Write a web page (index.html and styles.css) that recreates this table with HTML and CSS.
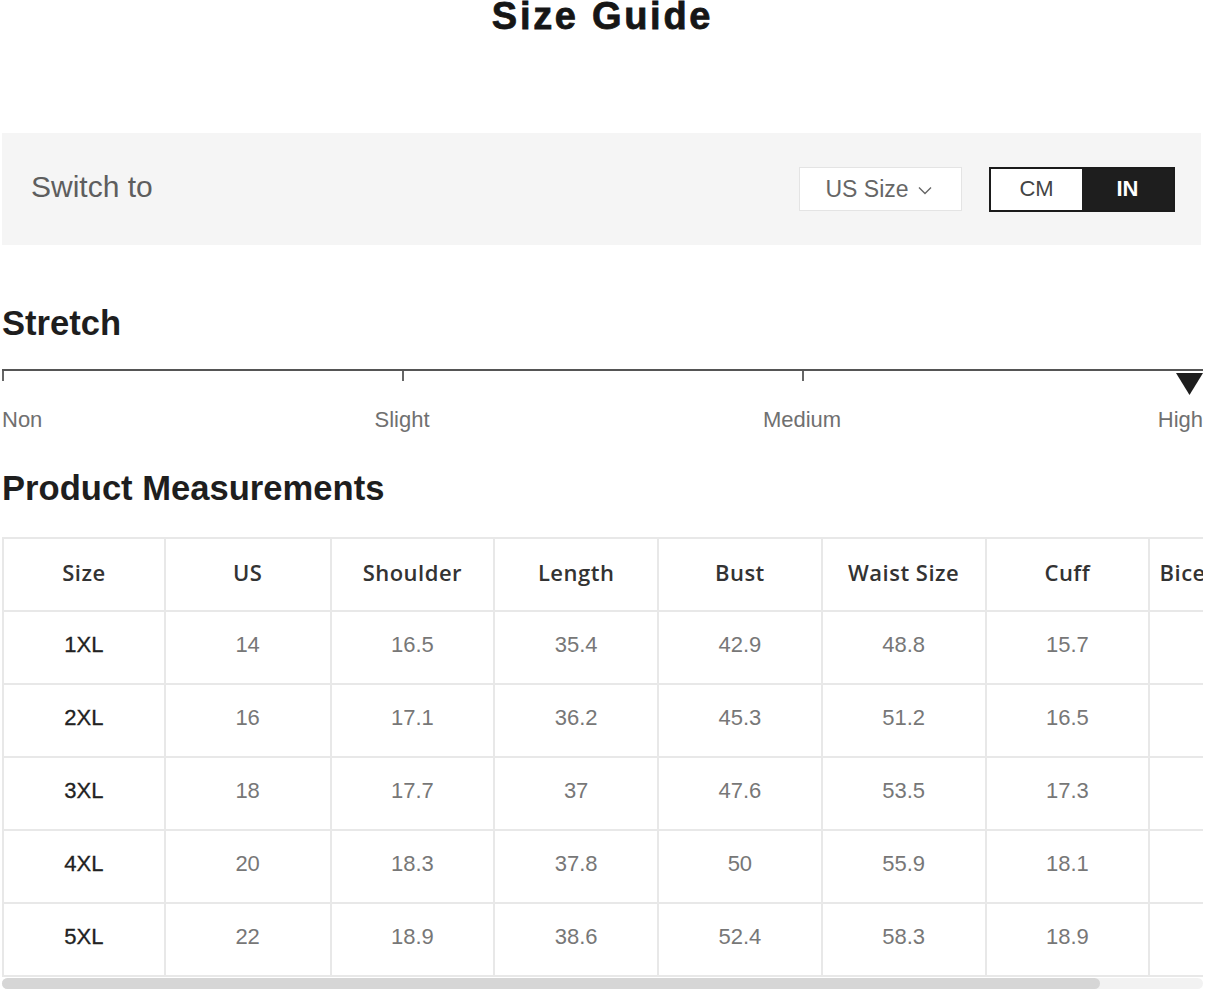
FILE: index.html
```html
<!DOCTYPE html>
<html lang="en">
<head>
<meta charset="utf-8">
<title>Size Guide</title>
<link rel="stylesheet" href="styles.css">
</head>
<body>
<h1 class="title">Size Guide</h1>

<div class="switch-bar">
  <span class="switch-label">Switch to</span>
  <div class="size-select">US Size
    <svg class="chev" width="14" height="9" viewBox="0 0 14 9"><polyline points="1,1.5 7,7.5 13,1.5" fill="none" stroke="#666" stroke-width="1.4"/></svg>
  </div>
  <div class="unit-toggle">
    <span class="unit">CM</span>
    <span class="unit active">IN</span>
  </div>
</div>

<h2 class="section-title stretch-title">Stretch</h2>
<div class="scale">
  <div class="track"></div>
  <div class="marks">
    <span class="tick"></span>
    <span class="tick"></span>
    <div class="marks-last">
      <span class="tick"></span>
      <svg class="pointer" width="27" height="22" viewBox="0 0 27 22"><polygon points="0,0 27,0 13.5,22" fill="#1e1e1e"/></svg>
    </div>
  </div>
  <div class="labels">
    <span class="lbl lbl-start">Non</span>
    <span class="lbl lbl-mid">Slight</span>
    <span class="lbl lbl-mid">Medium</span>
    <span class="lbl lbl-end">High</span>
  </div>
</div>

<h2 class="section-title measure-title">Product Measurements</h2>
<div class="table-wrap">
  <table class="measure">
    <colgroup>
      <col class="col-first">
      <col class="col-second">
      <col span="6" class="col-rest">
    </colgroup>
    <thead>
      <tr><th>Size</th><th>US</th><th>Shoulder</th><th>Length</th><th>Bust</th><th>Waist Size</th><th>Cuff</th><th>Bicep Length</th></tr>
    </thead>
    <tbody>
      <tr><td class="sz">1XL</td><td>14</td><td>16.5</td><td>35.4</td><td>42.9</td><td>48.8</td><td>15.7</td><td>15.9</td></tr>
      <tr><td class="sz">2XL</td><td>16</td><td>17.1</td><td>36.2</td><td>45.3</td><td>51.2</td><td>16.5</td><td>16.8</td></tr>
      <tr><td class="sz">3XL</td><td>18</td><td>17.7</td><td>37</td><td>47.6</td><td>53.5</td><td>17.3</td><td>17.6</td></tr>
      <tr><td class="sz">4XL</td><td>20</td><td>18.3</td><td>37.8</td><td>50</td><td>55.9</td><td>18.1</td><td>18.5</td></tr>
      <tr><td class="sz">5XL</td><td>22</td><td>18.9</td><td>38.6</td><td>52.4</td><td>58.3</td><td>18.9</td><td>19.3</td></tr>
    </tbody>
  </table>
</div>
<div class="hscroll"><div class="hscroll-thumb"></div></div>
</body>
</html>
```

FILE: styles.css
```css
html, body {
  margin: 0;
  background: #fff;
}
body {
  padding: 0 3px 0 2px;
  font-family: "Liberation Sans", Arial, sans-serif;
  color: #222;
  overflow: hidden;
}

.title {
  margin: 0 0 101px;
  font-size: 38px;
  line-height: 32px;
  font-weight: 700;
  letter-spacing: 2.7px;
  text-align: center;
  color: #161616;
  -webkit-text-stroke: 0.8px #161616;
}

.switch-bar {
  height: 112px;
  width: 1199px;
  box-sizing: border-box;
  background: #f5f5f5;
  display: flex;
  align-items: center;
  padding: 0 26px 0 29px;
}
.switch-label {
  font-size: 30px;
  color: #5e5e5e;
  margin-right: auto;
  margin-bottom: 5px;
}
.size-select {
  width: 163px;
  height: 44px;
  box-sizing: border-box;
  background: #fff;
  border: 1px solid #e4e4e4;
  display: flex;
  align-items: center;
  justify-content: center;
  gap: 9px;
  padding-right: 4px;
  font-size: 23px;
  color: #666;
}
.chev {
  margin-top: 3px;
}
.unit-toggle {
  margin-left: 27px;
  width: 186px;
  height: 45px;
  box-sizing: border-box;
  border: 2px solid #1b1b1b;
  display: flex;
}
.unit {
  flex: 1;
  display: flex;
  align-items: center;
  justify-content: center;
  font-size: 22px;
  color: #444;
  background: #fff;
}
.unit.active {
  background: #1e1e1e;
  color: #fff;
  font-weight: 700;
}

.section-title {
  margin: 0;
  font-size: 34.6px;
  line-height: 40px;
  font-weight: 700;
  color: #1e1e1e;
}
.stretch-title {
  margin-top: 58px;
}

.scale {
  margin-top: 26px;
  width: 1201px;
}
.track {
  height: 2px;
  background: #555;
}
.marks {
  display: grid;
  grid-template-columns: 400px 400px 1fr;
  height: 24px;
}
.marks-last {
  display: flex;
  justify-content: space-between;
  align-items: flex-start;
}
.tick {
  width: 2px;
  height: 10px;
  background: #666;
}
.pointer {
  margin-top: 2px;
}
.labels {
  margin-top: 12px;
  display: grid;
  grid-template-columns: 200px 400px 400px 201px;
  font-size: 22px;
  line-height: 26px;
  color: #707070;
}
.lbl-start { justify-self: start; }
.lbl-mid { justify-self: center; }
.lbl-end { justify-self: end; }

.measure-title {
  margin-top: 35px;
}

.table-wrap {
  margin-top: 29px;
  width: 1201px;
  overflow: hidden;
}
.measure {
  border-collapse: collapse;
  table-layout: fixed;
  width: 1310px;
}
.col-first { width: 161.75px; }
.col-second { width: 165.75px; }
.col-rest { width: 163.75px; }
.measure th,
.measure td {
  border: 2px solid #e8e8e8;
  height: 66px;
  padding: 0 0 5px;
  text-align: center;
  vertical-align: middle;
  white-space: nowrap;
}
.measure th {
  font-family: "Open Sans", "Liberation Sans", sans-serif;
  font-weight: 600;
  font-size: 22px;
  letter-spacing: 0.5px;
  color: #333;
  height: 65px;
  padding-bottom: 6px;
}
.measure td {
  font-size: 22px;
  color: #777;
}
.measure td.sz {
  color: #222;
  -webkit-text-stroke: 0.3px #222;
}

.hscroll {
  margin-top: 1px;
  width: 1201px;
  height: 11px;
  border-radius: 6px;
  background: #f2f2f2;
}
.hscroll-thumb {
  width: 1098px;
  height: 100%;
  border-radius: 6px;
  background: #d6d6d6;
}
```
